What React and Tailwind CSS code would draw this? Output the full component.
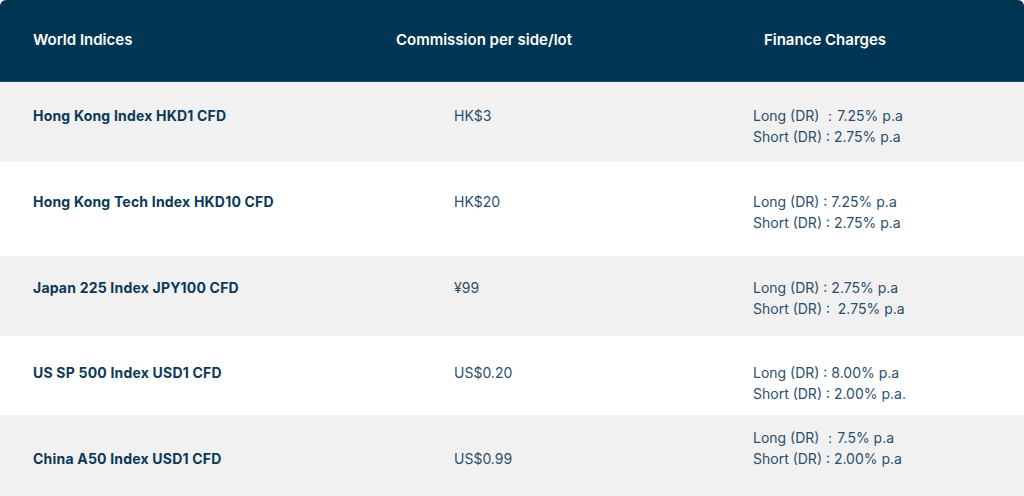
import React from "react";

const rows = [
  { name: "Hong Kong Index HKD1 CFD", comm: "HK$3", long: "Long (DR) ：7.25% p.a", short: "Short (DR) : 2.75% p.a", bg: "bg-[#f1f1f1]", h: "h-[80px]", pt: "pt-[23px]", npt: "pt-[23px]" },
  { name: "Hong Kong Tech Index HKD10 CFD", comm: "HK$20", long: "Long (DR) : 7.25% p.a", short: "Short (DR) : 2.75% p.a", bg: "bg-white", h: "h-[94px]", pt: "pt-[29px]", npt: "pt-[29px]" },
  { name: "Japan 225 Index JPY100 CFD", comm: "¥99", long: "Long (DR) : 2.75% p.a", short: "Short (DR) :\u00a0 2.75% p.a", bg: "bg-[#f1f1f1]", h: "h-[80px]", pt: "pt-[21px]", npt: "pt-[21px]" },
  { name: "US SP 500 Index USD1 CFD", comm: "US$0.20", long: "Long (DR) : 8.00% p.a", short: "Short (DR) : 2.00% p.a.", bg: "bg-white", h: "h-[79px]", pt: "pt-[26px]", npt: "pt-[26px]" },
  { name: "China A50 Index USD1 CFD", comm: "US$0.99", long: "Long (DR) ：7.5% p.a", short: "Short (DR) : 2.00% p.a", bg: "bg-[#f1f1f1]", h: "h-[81px]", pt: "pt-[12px]", npt: "pt-[33px]" },
];

export default function App() {
  return (
    <div className="w-[1024px] h-[496px] bg-white overflow-hidden" style={{ fontFamily: "Inter, 'Noto Sans', sans-serif" }}>
      <div className="grid grid-cols-[342px_284px_398px] h-[82px] bg-[#003654] rounded-t-[6px] items-center text-white font-semibold text-[15px] border-b border-[#1d4d6b]">
        <div className="pl-[33px]">World Indices</div>
        <div className="text-center">Commission per side/lot</div>
        <div className="text-center">Finance Charges</div>
      </div>
      {rows.map((r, i) => (
        <div key={i} className={`grid grid-cols-[342px_284px_398px] items-start ${r.bg} ${r.h} text-[14px] leading-[21px]`}>
          <div className={`pl-[33px] font-bold tracking-[0.2px] text-[#0d3858] ${r.npt}`}>{r.name}</div>
          <div className={`pl-[112px] text-[#2a4f6d] ${r.npt}`}>{r.comm}</div>
          <div className={`pl-[127px] text-[#2a4f6d] ${r.pt}`}>
            <div>{r.long}</div>
            <div>{r.short}</div>
          </div>
        </div>
      ))}
    </div>
  );
}
